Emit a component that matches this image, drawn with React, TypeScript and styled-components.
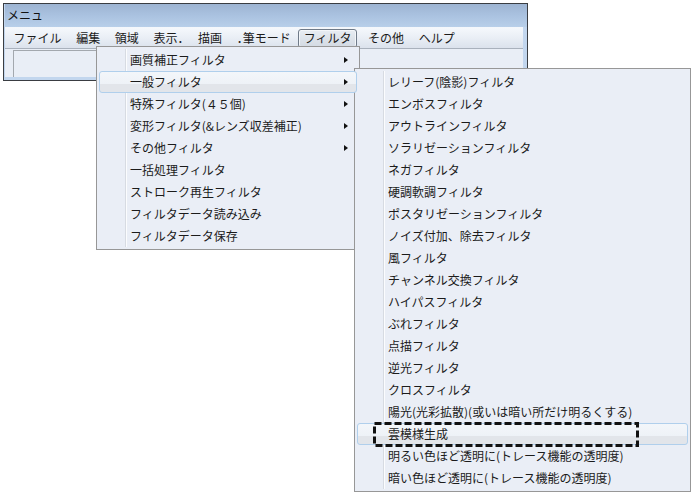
import React from 'react';
import styled, { createGlobalStyle, css } from 'styled-components';

const GlobalStyle = createGlobalStyle`
  html, body {
    margin: 0;
    padding: 0;
    background: #ffffff;
  }
  body {
    font-family: "Noto Sans CJK JP", "Noto Sans", sans-serif;
    font-size: 12px;
    color: #1b1b1b;
  }
`;

interface MenuEntry {
  label: string;
  sub?: boolean;
  hot?: boolean;
  focus?: boolean;
}

const menuBar = ['ファイル', '編集', '領域', '表示．', '描画', '．筆モード', 'フィルタ', 'その他', 'ヘルプ'];

const filterMenu: MenuEntry[] = [
  { label: '画質補正フィルタ', sub: true },
  { label: '一般フィルタ', sub: true, hot: true },
  { label: '特殊フィルタ(４５個)', sub: true },
  { label: '変形フィルタ(&レンズ収差補正)', sub: true },
  { label: 'その他フィルタ', sub: true },
  { label: '一括処理フィルタ' },
  { label: 'ストローク再生フィルタ' },
  { label: 'フィルタデータ読み込み' },
  { label: 'フィルタデータ保存' },
];

const generalMenu: MenuEntry[] = [
  { label: 'レリーフ(陰影)フィルタ' },
  { label: 'エンボスフィルタ' },
  { label: 'アウトラインフィルタ' },
  { label: 'ソラリゼーションフィルタ' },
  { label: 'ネガフィルタ' },
  { label: '硬調軟調フィルタ' },
  { label: 'ポスタリゼーションフィルタ' },
  { label: 'ノイズ付加、除去フィルタ' },
  { label: '風フィルタ' },
  { label: 'チャンネル交換フィルタ' },
  { label: 'ハイパスフィルタ' },
  { label: 'ぶれフィルタ' },
  { label: '点描フィルタ' },
  { label: '逆光フィルタ' },
  { label: 'クロスフィルタ' },
  { label: '陽光(光彩拡散)(或いは暗い所だけ明るくする)' },
  { label: '雲模様生成', hot: true, focus: true },
  { label: '明るい色ほど透明に(トレース機能の透明度)' },
  { label: '暗い色ほど透明に(トレース機能の透明度)' },
];

const App = () => {
  return (
    <>
      <GlobalStyle />
      <StyledCanvas>
        <StyledWindow>
          <StyledTitleBar>メニュ</StyledTitleBar>
          <StyledMenuBar>
            {menuBar.map((m) => (
              <StyledBarItem key={m} $active={m === 'フィルタ'}>
                {m}
              </StyledBarItem>
            ))}
          </StyledMenuBar>
          <StyledClient>
            <StyledInset />
          </StyledClient>
        </StyledWindow>

        <StyledMenu $left={96} $top={46} $width={264}>
          {filterMenu.map((item) => (
            <StyledItem key={item.label} $hot={item.hot}>
              <StyledLabel>{item.label}</StyledLabel>
              {item.sub && <StyledArrow />}
            </StyledItem>
          ))}
        </StyledMenu>

        <StyledMenu $left={354} $top={68} $width={337}>
          {generalMenu.map((item) => (
            <StyledItem key={item.label} $hot={item.hot}>
              <StyledLabel>{item.label}</StyledLabel>
              {item.focus && (
                <StyledFocus width="266" height="25" viewBox="0 0 266 25">
                  <rect
                    x="1.5"
                    y="1.5"
                    width="263"
                    height="22"
                    fill="none"
                    stroke="#111111"
                    strokeWidth="3"
                    strokeDasharray="7 3"
                  />
                </StyledFocus>
              )}
            </StyledItem>
          ))}
        </StyledMenu>
      </StyledCanvas>
    </>
  );
};

export default App;

const StyledCanvas = styled.div`
  position: relative;
  width: 695px;
  height: 496px;
  padding: 3px 0 0 3px;
  box-sizing: border-box;
  overflow: hidden;
`;

const StyledWindow = styled.div`
  width: 525px;
  height: 78px;
  box-sizing: border-box;
  border: 1px solid #3a3d42;
  background: #c2d6ee;
  padding: 0 4px 3px 1px;
  display: flex;
  flex-direction: column;
`;

const StyledTitleBar = styled.div`
  height: 23px;
  line-height: 22px;
  padding-left: 2px;
  margin-right: -4px;
  background: linear-gradient(to bottom, #9db4d2 0%, #aac2e0 50%, #b8cfe9 100%);
  color: #111;
  font-size: 12px;
`;

const StyledMenuBar = styled.div`
  height: 20px;
  display: flex;
  align-items: center;
  padding-left: 1px;
  border-top: 1px solid #f4f7fb;
  border-bottom: 1px solid #a9b1bc;
  background: linear-gradient(to bottom, #f5f8fc 0%, #e9eef5 50%, #dbe2ec 100%);
  font-feature-settings: 'halt';
`;

const StyledBarItem = styled.div<{ $active?: boolean }>`
  height: 17px;
  line-height: 16px;
  padding: 0 6px 0 6.6px;
  border: 1px solid transparent;
  border-radius: 3px;
  white-space: nowrap;
  color: #1b1b1b;
  ${({ $active }) =>
    $active &&
    css`
      padding: 0 5px 0 5px;
      margin-right: 3px;
      border-color: #6f7a88;
      background: linear-gradient(to bottom, #e8edf3 0%, #dde3ea 50%, #d3dae3 100%);
      box-shadow: inset 0 0 0 1px #f3f6f9;
    `}
`;

const StyledClient = styled.div`
  flex: 1;
  background: #e9eef6;
  padding: 1px 0 0 8px;
`;

const StyledInset = styled.div`
  width: 330px;
  height: 27px;
  box-sizing: border-box;
  border-top: 1px solid #a3a8ae;
  border-left: 1px solid #a3a8ae;
`;

const StyledMenu = styled.div<{ $left: number; $top: number; $width: number }>`
  position: absolute;
  left: ${({ $left }) => $left}px;
  top: ${({ $top }) => $top}px;
  width: ${({ $width }) => $width}px;
  box-sizing: border-box;
  border: 1px solid #979797;
  background: #eaeef6;
  padding: 2px 2px;
  display: flex;
  flex-direction: column;

  &::before {
    content: '';
    position: absolute;
    top: 2px;
    bottom: 2px;
    left: 28px;
    width: 1px;
    background: #d7dbe2;
    box-shadow: 1px 0 0 #fbfcfe;
  }
`;

const StyledItem = styled.div<{ $hot?: boolean }>`
  position: relative;
  height: 22px;
  box-sizing: border-box;
  border: 1px solid transparent;
  border-radius: 3px;
  display: flex;
  align-items: center;
  padding-left: 30px;
  white-space: nowrap;
  z-index: 1;
  ${({ $hot }) =>
    $hot &&
    css`
      border-color: #b0cfec;
      background: linear-gradient(to bottom, #f3f6fa 0%, #eef2f7 58%, #e2e5ea 60%, #e2e5ea 100%);
    `}
`;

const StyledLabel = styled.span`
  color: #1b1b1b;
  font-size: 12px;
  line-height: 20px;
`;

const StyledArrow = styled.span`
  margin-left: auto;
  margin-right: 8px;
  width: 0;
  height: 0;
  border-top: 3.5px solid transparent;
  border-bottom: 3.5px solid transparent;
  border-left: 4px solid #111;
`;

const StyledFocus = styled.svg`
  position: absolute;
  left: 15px;
  top: -2px;
  pointer-events: none;
`;
